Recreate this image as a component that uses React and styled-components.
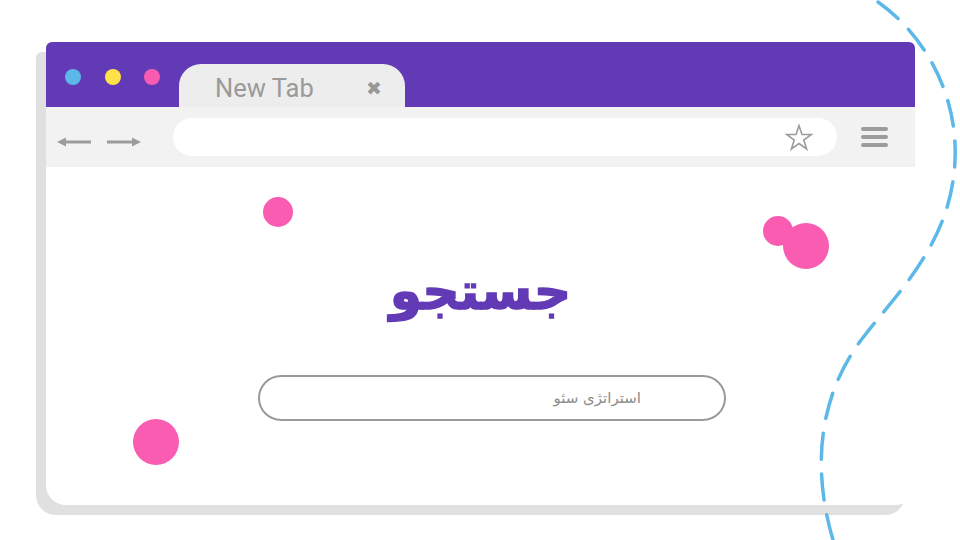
import React from "react";
import styled, { createGlobalStyle } from "styled-components";

const GlobalStyle = createGlobalStyle`
  body {
    margin: 0;
    background: #fff;
    font-family: Roboto, "Noto Sans", sans-serif;
  }
`;

const purple = "#633ab5";
const pink = "#f95cb0";
const gray = "#9c9c9c";

function App() {
  return (
    <Stage>
      <GlobalStyle />
      <Window>
        <Header>
          <Dots>
            <Dot $color="#5bb8e8" />
            <Dot $color="#ffe14a" />
            <Dot $color={pink} />
          </Dots>
          <Tab>
            <span>New Tab</span>
            <Close>✖</Close>
          </Tab>
        </Header>
        <Toolbar>
          <Arrows width="84" height="12" viewBox="0 0 84 12">
            <polygon points="0,6 9,1.5 9,10.5" fill={gray} />
            <rect x="8" y="4.5" width="26" height="3" fill={gray} />
            <rect x="50" y="4.5" width="26" height="3" fill={gray} />
            <polygon points="84,6 75,1.5 75,10.5" fill={gray} />
          </Arrows>
          <Address>
            <svg width="28" height="27" viewBox="-1 -1 28 27">
              <polygon
                points="13,0.5 15.94,9.45 25.36,9.48 17.76,15.05 20.64,24.02 13,18.5 5.36,24.02 8.24,15.05 0.64,9.48 10.06,9.45"
                fill="none"
                stroke={gray}
                strokeWidth="1.6"
              />
            </svg>
          </Address>
          <Menu>
            <Bar />
            <Bar />
            <Bar />
          </Menu>
        </Toolbar>
        <Body>
          <Bubble $x={217} $y={30} $size={30} />
          <Bubble $x={717} $y={49} $size={30} />
          <Bubble $x={737} $y={56} $size={46} />
          <Bubble $x={87} $y={252} $size={46} />
          <Title dir="rtl">جستجو</Title>
          <Search dir="rtl" placeholder="استراتژی سئو" />
        </Body>
      </Window>
      <Trail width="960" height="540" viewBox="0 0 960 540">
        <path
          d="M878 2 C925 35 958 95 955 160 C952 240 900 290 865 335 C825 385 808 455 833 540"
          fill="none"
          stroke="#5bb8e8"
          strokeWidth="3.5"
          strokeLinecap="round"
          strokeDasharray="26 15"
        />
      </Trail>
    </Stage>
  );
}

export default App;

const Stage = styled.div`
  position: relative;
  width: 960px;
  height: 540px;
  overflow: hidden;
  box-sizing: border-box;
  padding: 42px 0 0 46px;
`;

const Window = styled.div`
  width: 869px;
  height: 463px;
  display: flex;
  flex-direction: column;
  background: #fff;
  border-radius: 6px 6px 20px 20px;
  box-shadow: -10px 10px 0 #e0e0e0;
`;

const Header = styled.div`
  height: 65px;
  flex-shrink: 0;
  display: flex;
  align-items: flex-end;
  padding-left: 19px;
  background: ${purple};
  border-radius: 6px 6px 0 0;
`;

const Dots = styled.div`
  align-self: flex-start;
  margin-top: 27px;
  display: flex;
  gap: 23.5px;
`;

const Dot = styled.span`
  width: 16px;
  height: 16px;
  border-radius: 50%;
  background: ${(p) => p.$color};
`;

const Tab = styled.div`
  margin-left: 19px;
  width: 226px;
  height: 43px;
  box-sizing: border-box;
  padding: 4px 23px 0 36px;
  display: flex;
  align-items: center;
  justify-content: space-between;
  background: #ededed;
  border-radius: 22px 22px 0 0;
  color: #9a9a9a;
  font-size: 25.5px;
`;

const Close = styled.span`
  font-family: "DejaVu Sans", sans-serif;
  font-size: 19px;
  color: #999;
`;

const Toolbar = styled.div`
  height: 60px;
  flex-shrink: 0;
  display: flex;
  align-items: center;
  padding-left: 11px;
  background: #f2f2f2;
`;

const Arrows = styled.svg`
  margin-top: 9px;
`;

const Address = styled.div`
  margin-left: 32px;
  width: 664px;
  height: 38px;
  box-sizing: border-box;
  padding-right: 24px;
  display: flex;
  align-items: center;
  justify-content: flex-end;
  background: #fff;
  border-radius: 19px;
`;

const Menu = styled.div`
  margin-left: 24px;
  width: 27px;
  display: flex;
  flex-direction: column;
  gap: 4px;
`;

const Bar = styled.span`
  height: 4px;
  border-radius: 2px;
  background: ${gray};
`;

const Body = styled.div`
  position: relative;
  flex: 1;
  display: flex;
  flex-direction: column;
  align-items: center;
  padding-top: 84px;
`;

const Bubble = styled.span`
  position: absolute;
  left: ${(p) => p.$x}px;
  top: ${(p) => p.$y}px;
  width: ${(p) => p.$size}px;
  height: ${(p) => p.$size}px;
  border-radius: 50%;
  background: ${pink};
`;

const Title = styled.h1`
  margin: 0;
  font-family: "DejaVu Sans", sans-serif;
  font-weight: 700;
  font-size: 52px;
  line-height: 80px;
  color: ${purple};
  -webkit-text-stroke: 1.5px ${purple};
`;

const Search = styled.input`
  margin-top: 44px;
  margin-left: 23px;
  width: 468px;
  height: 46px;
  box-sizing: border-box;
  padding: 0 83px 0 20px;
  border: 2px solid #9a9a9a;
  border-radius: 23px;
  outline: none;
  background: #fff;
  font-family: "DejaVu Sans", sans-serif;
  font-size: 15px;

  &::placeholder {
    color: #8c8c8c;
  }
`;

const Trail = styled.svg`
  position: absolute;
  top: 0;
  left: 0;
  pointer-events: none;
`;
